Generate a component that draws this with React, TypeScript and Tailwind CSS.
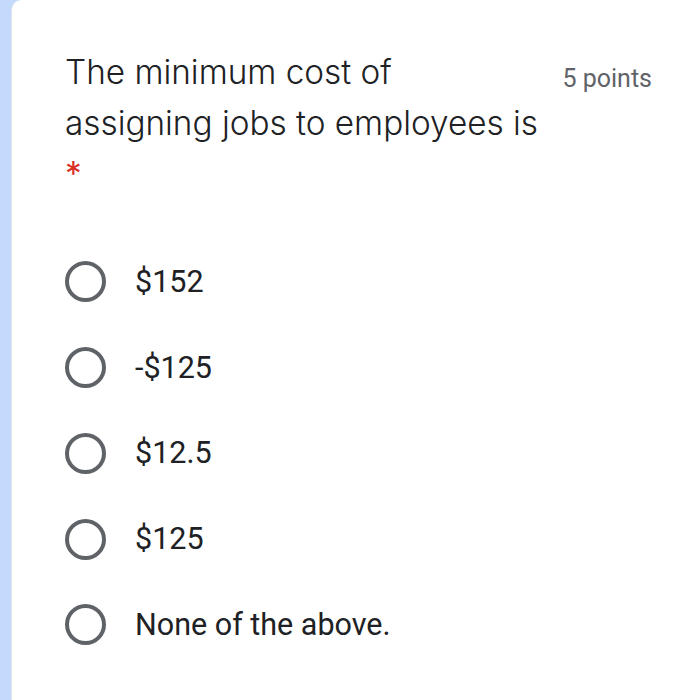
import React from "react";

const options = ["$152", "-$125", "$12.5", "$125", "None of the above."];

export default function App() {
  return (
    <div className="flex h-[700px] w-[677px] overflow-hidden bg-[#c4dafc]">
      <div className="ml-[11px] flex-1 rounded-tl-[10px] border-l border-[#dfe3ea] bg-white pl-[53px] pr-[25px] pt-[47px]">
        <div className="flex items-start justify-between">
          <div
            className="text-[33.3px] font-light leading-[51px] text-[#202124]"
            style={{ fontFamily: "Inter, 'Noto Sans', sans-serif" }}
          >
            <div>The minimum cost of</div>
            <div>assigning jobs to employees is</div>
            <div className="font-normal text-[#d93025]">*</div>
          </div>
          <div
            className="pt-[17px] text-[25px] leading-[30px] text-[#5f6368]"
            style={{ fontFamily: "Roboto, 'Liberation Sans', sans-serif" }}
          >
            5 points
          </div>
        </div>
        <div className="mt-[39px] flex flex-col">
          {options.map((o) => (
            <div key={o} className="flex h-[85.75px] items-center">
              <div className="h-[41px] w-[41px] shrink-0 rounded-full border-[4px] border-[#5f6368]" />
              <span
                className="ml-[29px] text-[30.5px] leading-[36px] text-[#202124]"
                style={{ fontFamily: "Roboto, 'Liberation Sans', sans-serif" }}
              >
                {o}
              </span>
            </div>
          ))}
        </div>
      </div>
    </div>
  );
}
